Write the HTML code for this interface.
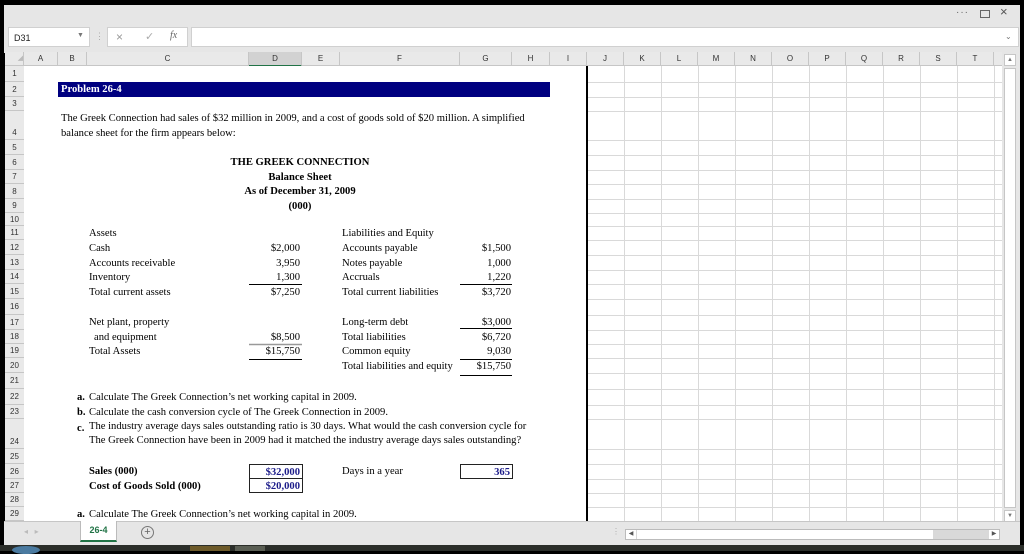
<!DOCTYPE html>
<html><head><meta charset="utf-8"><style>
*{margin:0;padding:0;box-sizing:border-box}
body{width:1024px;height:551px;background:#000;position:relative;overflow:hidden;font-family:"Liberation Sans",sans-serif}
.a{position:absolute;white-space:nowrap}
.s{font-family:"Liberation Serif",serif;font-size:10.6px;color:#000;line-height:13px}
.b{font-weight:bold}
.r{text-align:right}
.rh{position:absolute;left:5px;width:19px;font-size:8px;color:#333;text-align:center;border-bottom:1px solid #c6c6c6;background:#e9e9e9;display:flex;align-items:center;justify-content:center}
.ch{position:absolute;top:52px;height:14px;font-size:8px;color:#333;text-align:center;line-height:14px;border-right:1px solid #c6c6c6}
</style></head><body>
<div class="a" style="left:4px;top:5px;width:1016px;height:48px;background:#e6e6e6"></div>
<div class="a" style="left:956px;top:7px;font-size:10px;color:#666;letter-spacing:1px">···</div>
<div class="a" style="left:980px;top:10px;width:10px;height:8px;border:1px solid #666"></div>
<div class="a" style="left:1000px;top:4px;font-size:13px;color:#555">×</div>
<div class="a" style="left:8px;top:27px;width:82px;height:20px;background:#fff;border:1px solid #d0d0d0;font-size:9px;color:#222;padding:5px 0 0 5px">D31<span style="position:absolute;left:68px;top:4px;font-size:7px;color:#777">▼</span></div>
<div class="a" style="left:95px;top:31px;font-size:9px;color:#aaa">⋮</div>
<div class="a" style="left:107px;top:27px;width:81px;height:20px;background:#fff;border:1px solid #d0d0d0"></div>
<div class="a" style="left:116px;top:30px;font-size:12px;color:#999">×</div>
<div class="a" style="left:145px;top:30px;font-size:11px;color:#aaa">✓</div>
<div class="a" style="left:170px;top:30px;font-size:10px;color:#666;font-family:'Liberation Serif',serif;font-style:italic">fx</div>
<div class="a" style="left:191px;top:27px;width:828px;height:20px;background:#fff;border:1px solid #d0d0d0"></div>
<div class="a" style="left:1005px;top:32px;font-size:8px;color:#777">⌄</div>
<div class="a" style="left:5px;top:52px;width:1015px;height:14px;background:#e9e9e9;border-bottom:1px solid #c6c6c6"></div>
<div class="ch" style="left:5px;width:19px;color:#bbb;font-size:7px;text-align:right">◢</div>
<div class="ch" style="left:24px;width:34px">A</div>
<div class="ch" style="left:58px;width:29px">B</div>
<div class="ch" style="left:87px;width:162px">C</div>
<div class="ch" style="left:249px;width:53px;background:#d2d2d2;border-bottom:2px solid #217346;height:15px">D</div>
<div class="ch" style="left:302px;width:38px">E</div>
<div class="ch" style="left:340px;width:120px">F</div>
<div class="ch" style="left:460px;width:52px">G</div>
<div class="ch" style="left:512px;width:38px">H</div>
<div class="ch" style="left:550px;width:37px">I</div>
<div class="ch" style="left:587px;width:37px">J</div>
<div class="ch" style="left:624px;width:37px">K</div>
<div class="ch" style="left:661px;width:37px">L</div>
<div class="ch" style="left:698px;width:37px">M</div>
<div class="ch" style="left:735px;width:37px">N</div>
<div class="ch" style="left:772px;width:37px">O</div>
<div class="ch" style="left:809px;width:37px">P</div>
<div class="ch" style="left:846px;width:37px">Q</div>
<div class="ch" style="left:883px;width:37px">R</div>
<div class="ch" style="left:920px;width:37px">S</div>
<div class="ch" style="left:957px;width:37px">T</div>
<div class="a" style="left:24px;top:66px;width:978px;height:455px;background:#fff"></div>
<svg class="a" style="left:0;top:0" width="1024" height="551">
<g stroke="#d9d9d9" stroke-width="1">
<line x1="624.5" y1="66" x2="624.5" y2="521"/><line x1="661.5" y1="66" x2="661.5" y2="521"/><line x1="698.5" y1="66" x2="698.5" y2="521"/><line x1="735.5" y1="66" x2="735.5" y2="521"/><line x1="772.5" y1="66" x2="772.5" y2="521"/><line x1="809.5" y1="66" x2="809.5" y2="521"/><line x1="846.5" y1="66" x2="846.5" y2="521"/><line x1="883.5" y1="66" x2="883.5" y2="521"/><line x1="920.5" y1="66" x2="920.5" y2="521"/><line x1="957.5" y1="66" x2="957.5" y2="521"/><line x1="994.5" y1="66" x2="994.5" y2="521"/>
<line x1="588" x2="1002" y1="82.5" y2="82.5"/><line x1="588" x2="1002" y1="97.5" y2="97.5"/><line x1="588" x2="1002" y1="111.5" y2="111.5"/><line x1="588" x2="1002" y1="140.5" y2="140.5"/><line x1="588" x2="1002" y1="155.5" y2="155.5"/><line x1="588" x2="1002" y1="170.5" y2="170.5"/><line x1="588" x2="1002" y1="184.5" y2="184.5"/><line x1="588" x2="1002" y1="199.5" y2="199.5"/><line x1="588" x2="1002" y1="213.5" y2="213.5"/><line x1="588" x2="1002" y1="226.5" y2="226.5"/><line x1="588" x2="1002" y1="240.5" y2="240.5"/><line x1="588" x2="1002" y1="255.5" y2="255.5"/><line x1="588" x2="1002" y1="270.5" y2="270.5"/><line x1="588" x2="1002" y1="284.5" y2="284.5"/><line x1="588" x2="1002" y1="299.5" y2="299.5"/><line x1="588" x2="1002" y1="315.5" y2="315.5"/><line x1="588" x2="1002" y1="330.5" y2="330.5"/><line x1="588" x2="1002" y1="344.5" y2="344.5"/><line x1="588" x2="1002" y1="358.5" y2="358.5"/><line x1="588" x2="1002" y1="373.5" y2="373.5"/><line x1="588" x2="1002" y1="389.5" y2="389.5"/><line x1="588" x2="1002" y1="405.5" y2="405.5"/><line x1="588" x2="1002" y1="419.5" y2="419.5"/><line x1="588" x2="1002" y1="449.5" y2="449.5"/><line x1="588" x2="1002" y1="464.5" y2="464.5"/><line x1="588" x2="1002" y1="479.5" y2="479.5"/><line x1="588" x2="1002" y1="493.5" y2="493.5"/><line x1="588" x2="1002" y1="507.5" y2="507.5"/>
</g>
<line x1="587" y1="66" x2="587" y2="521" stroke="#000" stroke-width="2"/>
<g stroke="#000" stroke-width="1">
<line x1="249" x2="302" y1="284.5" y2="284.5"/><line x1="460" x2="512" y1="284.5" y2="284.5"/>
<line x1="460" x2="512" y1="328.5" y2="328.5"/>
<line x1="249" x2="302" y1="359.5" y2="359.5"/><line x1="460" x2="512" y1="359.5" y2="359.5"/>
<line x1="460" x2="512" y1="375.5" y2="375.5"/>
</g>
<line x1="249" x2="302" y1="344.5" y2="344.5" stroke="#999" stroke-width="1.5"/>
</svg>
<div class="a" style="left:5px;top:66px;width:19px;height:455px;background:#e9e9e9;border-right:1px solid #c6c6c6"></div>
<div class="rh" style="top:66px;height:16px">1</div>
<div class="rh" style="top:82px;height:15px">2</div>
<div class="rh" style="top:97px;height:14px">3</div>
<div class="rh" style="top:111px;height:29px;align-items:flex-end;padding-bottom:2px">4</div>
<div class="rh" style="top:140px;height:15px">5</div>
<div class="rh" style="top:155px;height:15px">6</div>
<div class="rh" style="top:170px;height:14px">7</div>
<div class="rh" style="top:184px;height:15px">8</div>
<div class="rh" style="top:199px;height:14px">9</div>
<div class="rh" style="top:213px;height:13px">10</div>
<div class="rh" style="top:226px;height:14px">11</div>
<div class="rh" style="top:240px;height:15px">12</div>
<div class="rh" style="top:255px;height:15px">13</div>
<div class="rh" style="top:270px;height:14px">14</div>
<div class="rh" style="top:284px;height:15px">15</div>
<div class="rh" style="top:299px;height:16px">16</div>
<div class="rh" style="top:315px;height:15px">17</div>
<div class="rh" style="top:330px;height:14px">18</div>
<div class="rh" style="top:344px;height:14px">19</div>
<div class="rh" style="top:358px;height:15px">20</div>
<div class="rh" style="top:373px;height:16px">21</div>
<div class="rh" style="top:389px;height:16px">22</div>
<div class="rh" style="top:405px;height:14px">23</div>
<div class="rh" style="top:419px;height:30px;align-items:flex-end;padding-bottom:2px">24</div>
<div class="rh" style="top:449px;height:15px">25</div>
<div class="rh" style="top:464px;height:15px">26</div>
<div class="rh" style="top:479px;height:14px">27</div>
<div class="rh" style="top:493px;height:14px">28</div>
<div class="rh" style="top:507px;height:14px">29</div>
<div class="a s b" style="left:58px;top:82px;width:492px;height:15px;background:#000080;color:#fff;padding:1px 0 0 3px">Problem 26-4</div>
<div class="a s" style="left:61px;top:112px">The Greek Connection had sales of $32 million in 2009, and a cost of goods sold of $20 million. A simplified</div>
<div class="a s" style="left:61px;top:127px">balance sheet for the firm appears below:</div>
<div class="a s b" style="left:200px;width:200px;top:156px;text-align:center">THE GREEK CONNECTION</div>
<div class="a s b" style="left:200px;width:200px;top:171px;text-align:center">Balance Sheet</div>
<div class="a s b" style="left:200px;width:200px;top:185px;text-align:center">As of December 31, 2009</div>
<div class="a s b" style="left:200px;width:200px;top:200px;text-align:center">(000)</div>
<div class="a s" style="left:89px;top:227px">Assets</div>
<div class="a s" style="left:89px;top:242px">Cash</div>
<div class="a s" style="left:89px;top:257px">Accounts receivable</div>
<div class="a s" style="left:89px;top:271px">Inventory</div>
<div class="a s" style="left:89px;top:286px">Total current assets</div>
<div class="a s" style="left:89px;top:316px">Net plant, property</div>
<div class="a s" style="left:94px;top:331px">and equipment</div>
<div class="a s" style="left:89px;top:345px">Total Assets</div>
<div class="a s r" style="left:240px;width:60px;top:242px">$2,000</div>
<div class="a s r" style="left:240px;width:60px;top:257px">3,950</div>
<div class="a s r" style="left:240px;width:60px;top:271px">1,300</div>
<div class="a s r" style="left:240px;width:60px;top:286px">$7,250</div>
<div class="a s r" style="left:240px;width:60px;top:331px">$8,500</div>
<div class="a s r" style="left:240px;width:60px;top:345px">$15,750</div>
<div class="a s" style="left:342px;top:227px">Liabilities and Equity</div>
<div class="a s" style="left:342px;top:242px">Accounts payable</div>
<div class="a s" style="left:342px;top:257px">Notes payable</div>
<div class="a s" style="left:342px;top:271px">Accruals</div>
<div class="a s" style="left:342px;top:286px">Total current liabilities</div>
<div class="a s" style="left:342px;top:316px">Long-term debt</div>
<div class="a s" style="left:342px;top:331px">Total liabilities</div>
<div class="a s" style="left:342px;top:345px">Common equity</div>
<div class="a s" style="left:342px;top:360px">Total liabilities and equity</div>
<div class="a s r" style="left:450px;width:61px;top:242px">$1,500</div>
<div class="a s r" style="left:450px;width:61px;top:257px">1,000</div>
<div class="a s r" style="left:450px;width:61px;top:271px">1,220</div>
<div class="a s r" style="left:450px;width:61px;top:286px">$3,720</div>
<div class="a s r" style="left:450px;width:61px;top:316px">$3,000</div>
<div class="a s r" style="left:450px;width:61px;top:331px">$6,720</div>
<div class="a s r" style="left:450px;width:61px;top:345px">9,030</div>
<div class="a s r" style="left:450px;width:61px;top:360px">$15,750</div>
<div class="a s b" style="left:77px;top:391px">a.</div><div class="a s" style="left:89px;top:391px">Calculate The Greek Connection’s net working capital in 2009.</div>
<div class="a s b" style="left:77px;top:406px">b.</div><div class="a s" style="left:89px;top:406px">Calculate the cash conversion cycle of The Greek Connection in 2009.</div>
<div class="a s b" style="left:77px;top:422px">c.</div><div class="a s" style="left:89px;top:420px">The industry average days sales outstanding ratio is 30 days. What would the cash conversion cycle for</div>
<div class="a s" style="left:89px;top:434px">The Greek Connection have been in 2009 had it matched the industry average days sales outstanding?</div>
<div class="a s b" style="left:89px;top:465px">Sales (000)</div>
<div class="a s b" style="left:89px;top:480px">Cost of Goods Sold (000)</div>
<div class="a s b r" style="left:249px;top:464px;width:54px;height:15px;border:1px solid #222;color:#1c1c8a;padding:1px 2px 0 0">$32,000</div>
<div class="a s b r" style="left:249px;top:478px;width:54px;height:15px;border:1px solid #222;color:#1c1c8a;padding:1px 2px 0 0">$20,000</div>
<div class="a s" style="left:342px;top:465px">Days in a year</div>
<div class="a s b r" style="left:460px;top:464px;width:53px;height:15px;border:1px solid #222;color:#1c1c8a;padding:1px 2px 0 0">365</div>
<div class="a s b" style="left:77px;top:508px">a.</div><div class="a s" style="left:89px;top:508px">Calculate The Greek Connection’s net working capital in 2009.</div>
<div class="a" style="left:1002px;top:52px;width:18px;height:471px;background:#e6e6e6"></div>
<div class="a" style="left:1004px;top:54px;width:12px;height:12px;background:#fff;border:1px solid #c6c6c6;font-size:6px;color:#777;text-align:center;line-height:10px">▲</div>
<div class="a" style="left:1004px;top:68px;width:12px;height:440px;background:#fff;border:1px solid #c6c6c6"></div>
<div class="a" style="left:1004px;top:510px;width:12px;height:12px;background:#fff;border:1px solid #c6c6c6;font-size:6px;color:#777;text-align:center;line-height:10px">▼</div>
<div class="a" style="left:4px;top:521px;width:1016px;height:24px;background:#e6e6e6;border-top:1px solid #c6c6c6"></div>
<div class="a" style="left:24px;top:527px;font-size:8px;color:#bbb">◂ &nbsp; ▸</div>
<div class="a" style="left:80px;top:521px;width:37px;height:21px;background:#fff;border:1px solid #bbb;border-top:none;border-bottom:2px solid #217346;font-size:9px;font-weight:bold;color:#217346;text-align:center;line-height:19px">26-4</div>
<div class="a" style="left:141px;top:526px;width:13px;height:13px;border:1px solid #777;border-radius:50%;font-size:11px;color:#666;text-align:center;line-height:11px">+</div>
<div class="a" style="left:612px;top:527px;font-size:8px;color:#aaa">⋮</div>
<div class="a" style="left:625px;top:529px;width:375px;height:11px;background:#d9d9d9;border:1px solid #bbb"></div>
<div class="a" style="left:626px;top:530px;width:10px;height:9px;background:#fff;font-size:6px;color:#555;text-align:center;line-height:9px">◀</div>
<div class="a" style="left:637px;top:530px;width:296px;height:9px;background:#fff"></div>
<div class="a" style="left:989px;top:530px;width:10px;height:9px;background:#fff;font-size:6px;color:#555;text-align:center;line-height:9px">▶</div>
<div class="a" style="left:0;top:545px;width:1024px;height:6px;background:#2b2e2a"></div>
<div class="a" style="left:12px;top:546px;width:28px;height:8px;border-radius:50%;background:#4a7aa0"></div>
<div class="a" style="left:190px;top:546px;width:40px;height:5px;background:#6d5a2a"></div>
<div class="a" style="left:235px;top:546px;width:30px;height:5px;background:#5a5e54"></div>
</body></html>
